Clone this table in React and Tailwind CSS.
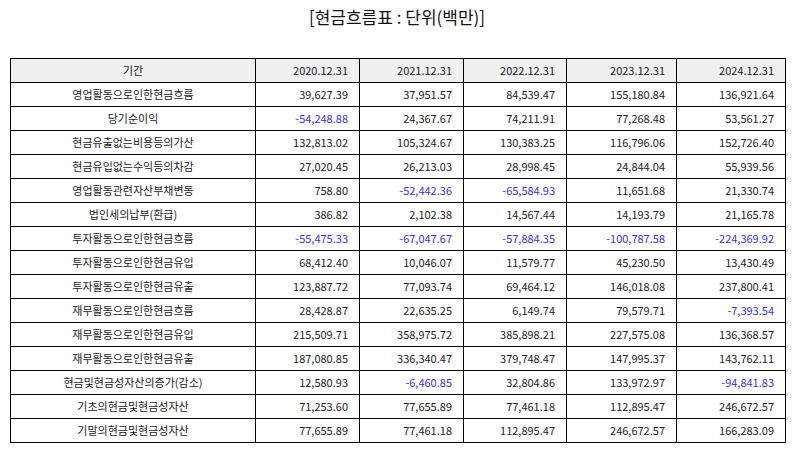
import React from 'react';

const years = ['2020.12.31', '2021.12.31', '2022.12.31', '2023.12.31', '2024.12.31'];

const rows = [
  ['영업활동으로인한현금흐름', '39,627.39', '37,951.57', '84,539.47', '155,180.84', '136,921.64'],
  ['당기순이익', '-54,248.88', '24,367.67', '74,211.91', '77,268.48', '53,561.27'],
  ['현금유출없는비용등의가산', '132,813.02', '105,324.67', '130,383.25', '116,796.06', '152,726.40'],
  ['현금유입없는수익등의차감', '27,020.45', '26,213.03', '28,998.45', '24,844.04', '55,939.56'],
  ['영업활동관련자산부채변동', '758.80', '-52,442.36', '-65,584.93', '11,651.68', '21,330.74'],
  ['법인세의납부(환급)', '386.82', '2,102.38', '14,567.44', '14,193.79', '21,165.78'],
  ['투자활동으로인한현금흐름', '-55,475.33', '-67,047.67', '-57,884.35', '-100,787.58', '-224,369.92'],
  ['투자활동으로인한현금유입', '68,412.40', '10,046.07', '11,579.77', '45,230.50', '13,430.49'],
  ['투자활동으로인한현금유출', '123,887.72', '77,093.74', '69,464.12', '146,018.08', '237,800.41'],
  ['재무활동으로인한현금흐름', '28,428.87', '22,635.25', '6,149.74', '79,579.71', '-7,393.54'],
  ['재무활동으로인한현금유입', '215,509.71', '358,975.72', '385,898.21', '227,575.08', '136,368.57'],
  ['재무활동으로인한현금유출', '187,080.85', '336,340.47', '379,748.47', '147,995.37', '143,762.11'],
  ['현금및현금성자산의증가(감소)', '12,580.93', '-6,460.85', '32,804.86', '133,972.97', '-94,841.83'],
  ['기초의현금및현금성자산', '71,253.60', '77,655.89', '77,461.18', '112,895.47', '246,672.57'],
  ['기말의현금및현금성자산', '77,655.89', '77,461.18', '112,895.47', '246,672.57', '166,283.09'],
];

const colWidths = ['w-[245px]', 'w-[104px]', 'w-[104px]', 'w-[103px]', 'w-[110px]', 'w-[109px]'];

export default function App() {
  return (
    <div className="w-[794px] h-[452px] bg-white text-[#222] font-['Noto_Sans_CJK_KR','Noto_Sans',sans-serif]">
      <div className="h-[40px] pt-[3px] text-center text-[17px] leading-[28px] text-[#111]">
        [현금흐름표 : 단위(백만)]
      </div>
      <div className="pt-[18px] px-[10px]">
        <table className="w-[775px] table-fixed border-collapse text-[11px]">
          <colgroup>
            {colWidths.map((w, i) => (
              <col key={i} className={w} />
            ))}
          </colgroup>
          <thead>
            <tr className="h-[24px] bg-[#f0f0f0]">
              <th className="border border-black font-normal text-center">기간</th>
              {years.map((y) => (
                <th key={y} className="border border-black font-normal text-right pr-[11px]">
                  {y}
                </th>
              ))}
            </tr>
          </thead>
          <tbody>
            {rows.map((r) => (
              <tr key={r[0]} className="h-[24px]">
                <td className="border border-black text-center">{r[0]}</td>
                {r.slice(1).map((v, i) => (
                  <td
                    key={i}
                    className={`border border-black text-right pr-[11px] ${v.startsWith('-') ? 'text-[#3535d0]' : ''}`}
                  >
                    {v}
                  </td>
                ))}
              </tr>
            ))}
          </tbody>
        </table>
      </div>
    </div>
  );
}
